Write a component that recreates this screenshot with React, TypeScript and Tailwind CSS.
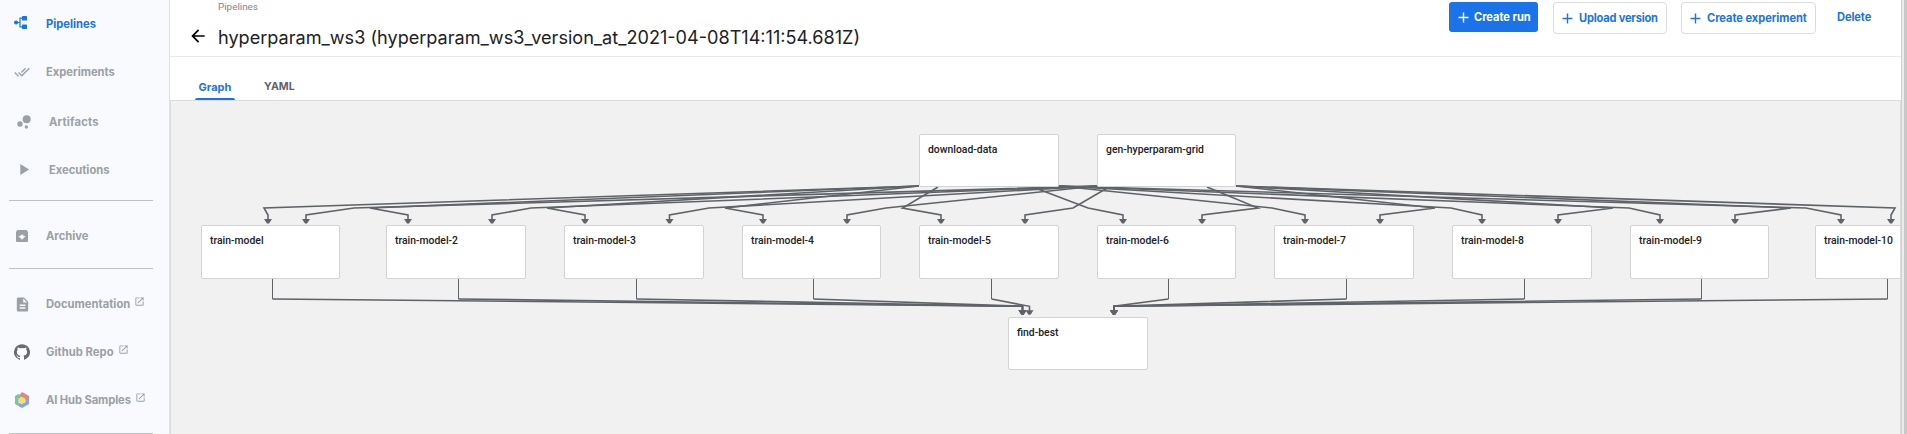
import React from 'react';

const OX = 170;
const OY = 100;

const nodes: [string, number, number, number, number][] = [
  ['download-data', 919, 134, 140, 53],
  ['gen-hyperparam-grid', 1097, 134, 139, 53],
  ['train-model', 201, 225, 139, 54],
  ['train-model-2', 386, 225, 140, 54],
  ['train-model-3', 564, 225, 140, 54],
  ['train-model-4', 742, 225, 139, 54],
  ['train-model-5', 919, 225, 140, 54],
  ['train-model-6', 1097, 225, 139, 54],
  ['train-model-7', 1274, 225, 140, 54],
  ['train-model-8', 1452, 225, 140, 54],
  ['train-model-9', 1630, 225, 139, 54],
  ['train-model-10', 1815, 225, 140, 54],
  ['find-best', 1008, 317, 140, 53],
];

// start x, start y, bend x, arrow x
const fanOut: [number, number, number, number][] = [
  [919, 186, 264, 268],
  [919, 186, 370, 408],
  [919, 186, 547, 585],
  [919, 186, 725, 763],
  [938, 187, 902.5, 941],
  [1030, 186, 1088, 1123],
  [1059, 186, 1272, 1305],
  [1059, 186, 1451, 1482],
  [1059, 186, 1629, 1660],
  [1059, 186, 1806, 1841],
  [1097, 186, 354, 306],
  [1097, 186, 531, 492],
  [1097, 186, 709, 669.5],
  [1097, 186, 886, 847],
  [1109, 187, 1073, 1025],
  [1207, 187, 1258, 1202],
  [1236, 186, 1435, 1380],
  [1236, 186, 1613, 1558],
  [1236, 186, 1791, 1735],
  [1236, 186, 1895, 1891],
];

// column x, arrow x
const fanIn: [number, number][] = [
  [272.5, 1022.5],
  [458.5, 1022.5],
  [636.5, 1022.5],
  [813.5, 1022.5],
  [991.5, 1029.5],
  [1168.5, 1114],
  [1346.5, 1114],
  [1524.5, 1114],
  [1701.5, 1114],
  [1887.5, 1114],
];

const arrowHead = (x: number, y: number) => `M${x - 4} ${y}h8l-3 4.5h-2z`;

function Edges() {
  return (
    <svg className="absolute inset-0 h-[334px] w-[1731px]" viewBox="170 100 1731 334" fill="none" stroke="#5f6368" strokeWidth="1.6">
      {fanOut.map(([sx, sy, bx, ax]) => (
        <g key={`${sx}-${bx}`}>
          <path d={`M${sx} ${sy}L${bx} 208L${ax} 215V220`} />
          <path d={arrowHead(ax, 219)} fill="#5f6368" stroke="none" />
        </g>
      ))}
      {fanIn.map(([cx, ax]) => (
        <g key={cx}>
          <path d={`M${cx} 279V299`} strokeWidth="1" />
          <path d={`M${cx} 299L${ax} 306.3V311`} />
          <path d={arrowHead(ax, 310.3)} fill="#5f6368" stroke="none" />
        </g>
      ))}
    </svg>
  );
}

function Icon({ d, className }: { d: string; className: string }) {
  return (
    <svg viewBox="0 0 24 24" className={className} fill="currentColor">
      <path d={d} />
    </svg>
  );
}

const PATHS = {
  doneAll: 'M18 7l-1.41-1.41-6.34 6.34 1.41 1.41L18 7zm4.24-1.41L11.66 16.17 7.48 12l-1.41 1.41L11.66 19l12-12-1.42-1.41zM.41 13.41L6 19l1.41-1.41L1.83 12 .41 13.41z',
  play: 'M8 5v14l11-7z',
  archive: 'M20.54 5.23l-1.39-1.68C18.88 3.21 18.47 3 18 3H6c-.47 0-.88.21-1.16.55L3.46 5.23C3.17 5.57 3 6.02 3 6.5V19c0 1.1.9 2 2 2h14c1.1 0 2-.9 2-2V6.5c0-.48-.17-.93-.46-1.27zM12 17.5L6.5 12H10v-2h4v2h3.5L12 17.5z',
  doc: 'M14 2H6c-1.1 0-1.99.9-1.99 2L4 20c0 1.1.89 2 1.99 2H18c1.1 0 2-.9 2-2V8l-6-6zm2 16H8v-2h8v2zm0-4H8v-2h8v2zm-3-5V3.5L18.5 9H13z',
  open: 'M19 19H5V5h7V3H5c-1.11 0-2 .9-2 2v14c0 1.1.89 2 2 2h14c1.1 0 2-.9 2-2v-7h-2v7zM14 3v2h3.59l-9.83 9.83 1.41 1.41L19 6.41V10h2V3h-7z',
  back: 'M20 11H7.83l5.59-5.59L12 4l-8 8 8 8 1.41-1.41L7.83 13H20v-2z',
  plus: 'M19 13h-6v6h-2v-6H5v-2h6V5h2v6h6v2z',
  github: 'M12 .3a12 12 0 0 0-3.8 23.4c.6.1.8-.3.8-.6v-2c-3.3.7-4-1.6-4-1.6-.6-1.4-1.4-1.8-1.4-1.8-1-.7.1-.7.1-.7 1.2 0 1.9 1.2 1.9 1.2 1 1.8 2.8 1.3 3.5 1 0-.8.4-1.3.7-1.6-2.7-.3-5.5-1.3-5.5-6 0-1.2.5-2.3 1.3-3.1-.2-.4-.6-1.6 0-3.2 0 0 1-.3 3.4 1.2a11.5 11.5 0 0 1 6 0c2.3-1.5 3.3-1.2 3.3-1.2.6 1.6.2 2.8 0 3.2.9.8 1.3 1.9 1.3 3.2 0 4.6-2.8 5.6-5.5 5.9.5.4.9 1 .9 2.2v3.3c0 .3.1.7.8.6A12 12 0 0 0 12 .3',
};

function PipelinesIcon() {
  return (
    <svg viewBox="0 0 13 13" className="mb-[3px] h-[13px] w-[13px]" fill="currentColor">
      <circle cx="2.1" cy="6.5" r="2.1" />
      <rect x="8" y="0" width="5" height="4.4" rx=".4" />
      <rect x="8" y="8.6" width="5" height="4.4" rx=".4" />
      <path d="M2 6.5H6M9 2.2H6V10.8H9" fill="none" stroke="currentColor" strokeWidth="1.2" />
    </svg>
  );
}

function BubbleIcon() {
  return (
    <svg viewBox="0 0 24 24" className="h-[20px] w-[20px]" fill="currentColor">
      <circle cx="7.2" cy="14.4" r="3.2" />
      <circle cx="14.8" cy="18" r="2" />
      <circle cx="15.2" cy="8.8" r="4.8" />
    </svg>
  );
}

function HubIcon() {
  return (
    <svg viewBox="0 0 14 16" className="h-[16px] w-[14px]">
      <path d="M7 0l7 4v4l-3.4 0L7 5.6 3.6 4z" fill="#e28683" />
      <path d="M0 4l3.4-2L7 4.4 3.6 7v4.6L3.4 14 0 12z" fill="#84c395" />
      <path d="M14 8v4l-7 4-3.6-2V10.5L7 12l3.5-2V8z" fill="#7fa6f5" />
      <path d="M7 4.8l3.2 1.7v3.6L7 11.8l-3.2-1.7V6.5z" fill="#fadc66" />
    </svg>
  );
}

function NavItem({ icon, label, className = '', labelClass = '', external = false }: { icon: React.ReactNode; label: string; className?: string; labelClass?: string; external?: boolean }) {
  return (
    <div className={`flex h-[48px] shrink-0 items-center ${className}`}>
      <span className="flex w-[46px] shrink-0 items-center pl-[14px]">{icon}</span>
      <span className={`whitespace-nowrap ${labelClass}`}>{label}</span>
      {external && <Icon d={PATHS.open} className="mb-[6px] ml-[4px] h-[11px] w-[11px]" />}
    </div>
  );
}

function Rule({ className }: { className: string }) {
  return <div className={`mr-[16px] ml-[9px] h-px shrink-0 bg-[#bdc1c6] ${className}`} />;
}

export default function App() {
  return (
    <div className="flex h-[434px] w-[1907px] overflow-hidden bg-white font-['Inter',sans-serif]">
      <nav className="flex w-[170px] shrink-0 flex-col overflow-hidden border-r border-[#e0e2e5] bg-[#f8fafd] text-[11.2px] font-bold text-[#9aa0a6]">
        <NavItem icon={<PipelinesIcon />} label="Pipelines" className="text-[#1a73e8]" />
        <NavItem icon={<Icon d={PATHS.doneAll} className="h-4 w-4" />} label="Experiments" />
        <NavItem icon={<BubbleIcon />} label="Artifacts" className="mt-[2px]" labelClass="pl-[3px] tracking-[0.2px]" />
        <NavItem icon={<Icon d={PATHS.play} className="mb-px h-[19px] w-[19px]" />} label="Executions" labelClass="pl-[3px]" />
        <Rule className="mt-[6px]" />
        <NavItem icon={<Icon d={PATHS.archive} className="h-4 w-4" />} label="Archive" className="mt-[11px]" />
        <Rule className="mt-[8px]" />
        <NavItem icon={<Icon d={PATHS.doc} className="h-[17px] w-[17px]" />} label="Documentation" className="mt-[11px]" labelClass="tracking-[0.03px]" external />
        <NavItem icon={<Icon d={PATHS.github} className="h-4 w-4 text-[#6b6b6b]" />} label="Github Repo" labelClass="tracking-[0.06px]" external />
        <NavItem icon={<span className="pl-px"><HubIcon /></span>} label="AI Hub Samples" labelClass="tracking-[-0.1px]" external />
        <Rule className="mt-[9px]" />
      </nav>

      <main className="flex w-[1731px] shrink-0 flex-col">
        <header className="flex h-[57px] shrink-0 items-start justify-between border-b border-[#e8eaed]">
          <div className="flex flex-col pl-[17.5px]">
            <div className="h-[16px] pt-px pl-[30.5px] font-['Roboto',sans-serif] text-[9.87px] leading-[12px] text-[#80868b]">Pipelines</div>
            <div className="flex h-[40px] items-center">
              <Icon d={PATHS.back} className="h-5 w-5 text-black" />
              <h1 className="pt-[2px] pl-[10.5px] text-[18.1px] leading-6 whitespace-nowrap text-[#202124]">hyperparam_ws3 (hyperparam_ws3_version_at_2021-04-08T14:11:54.681Z)</h1>
            </div>
          </div>
          <div className="flex items-start pt-[2px] pr-[29px] text-[11.1px] font-bold whitespace-nowrap text-[#1a73e8]">
            <button className="flex h-[30px] w-[89px] items-center rounded-[3px] bg-[#1a73e8] pl-[6px] text-white">
              <Icon d={PATHS.plus} className="h-[17px] w-[17px]" />
              <span className="pl-[2px] tracking-[-0.05px]">Create run</span>
            </button>
            <button className="ml-[15px] flex h-[32px] w-[114px] items-center rounded-[4px] border border-[#dadce0] pl-[5px]">
              <Icon d={PATHS.plus} className="h-[17px] w-[17px]" />
              <span className="pl-[3px] tracking-[-0.2px]">Upload version</span>
            </button>
            <button className="ml-[14px] flex h-[32px] w-[135px] items-center rounded-[4px] border border-[#dadce0] pl-[5px]">
              <Icon d={PATHS.plus} className="h-[17px] w-[17px]" />
              <span className="pl-[3px] tracking-[-0.04px]">Create experiment</span>
            </button>
            <button className="ml-[21px] flex h-[30px] w-[35px] items-center tracking-[-0.1px]">Delete</button>
          </div>
        </header>

        <div className="flex h-[43px] shrink-0 pl-[25px] text-[11px] leading-[14px] font-bold text-[#5f6368]">
          <div className="flex w-[40px] flex-col items-center justify-between pt-[23px] text-[#1a73e8]">
            <span>Graph</span>
            <span className="h-[2px] w-full rounded-t-[2px] bg-[#1a73e8]" />
          </div>
          <span className="pt-[23px] pl-[29px] text-[10.6px]">YAML</span>
        </div>

        <section className="relative h-[334px] w-[1731px] shrink-0 overflow-hidden bg-[#f1f1f1]">
          <Edges />
          {nodes.map(([label, x, y, w, h]) => (
            <div
              key={label}
              className="absolute rounded-[2px] border border-[#d2d3d5] bg-white pt-[8px] pl-[8px] font-['Roboto',sans-serif] text-[10.4px] leading-[14px] font-medium whitespace-nowrap text-[#202124]"
              style={{ left: x - OX, top: y - OY, width: w, height: h }}
            >
              {label}
            </div>
          ))}
          <div className="pointer-events-none absolute inset-0 border border-b-0 border-[#dcdcdc]" />
        </section>
      </main>

      <div className="h-full w-px bg-[#d0d0d0]" />
      <div className="h-full w-[2px] bg-[#ececec]" />
      <div className="h-full w-[3px] bg-[#c8c8c8]" />
    </div>
  );
}
